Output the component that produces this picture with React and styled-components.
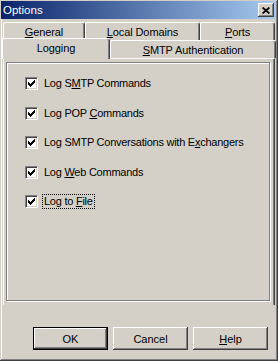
import React from "react";
import styled, { createGlobalStyle } from "styled-components";

const Global = createGlobalStyle`
  html, body { margin: 0; padding: 0; background: #d4d0c8; }
  body { font-family: "Liberation Sans", Arial, sans-serif; font-size: 11px; color: #000; }
`;

const Window = styled.div`
  box-sizing: border-box;
  width: 278px;
  height: 361px;
  background: #d4d0c8;
  padding: 1px 2px 2px 1px;
  box-shadow: inset -1px -1px #404040, inset 1px 1px #d4d0c8,
    inset -2px -2px #808080, inset 2px 2px #ffffff;
  display: flex;
  flex-direction: column;
`;

const TitleBar = styled.div`
  height: 18px;
  display: flex;
  align-items: center;
  justify-content: space-between;
  padding: 0 2px 0 2px;
  background: linear-gradient(to right, #0a246a, #a6caf0);
  color: #fff;
  font-size: 11.5px;
`;

const CloseBtn = styled.div`
  box-sizing: border-box;
  width: 16px;
  height: 14px;
  background: #d4d0c8;
  display: flex;
  align-items: center;
  justify-content: center;
  box-shadow: inset -1px -1px #404040, inset 1px 1px #ffffff,
    inset -2px -2px #808080, inset 2px 2px #d4d0c8;
`;

const Body = styled.div`
  display: flex;
  flex-direction: column;
  padding-left: 1px;
`;

const TabArea = styled.div`
  width: 274px;
  display: flex;
  flex-direction: column;
  margin-top: 3px;
`;

const TabRow = styled.div`
  display: flex;
  height: ${(p) => p.$h}px;
  margin-top: ${(p) => p.$mt}px;
  padding: 0 ${(p) => p.$px}px;
  position: relative;
  z-index: ${(p) => p.$z};
`;

const Tab = styled.div`
  box-sizing: border-box;
  flex: none;
  width: ${(p) => p.$w}px;
  height: ${(p) => (p.$selected ? 21 : 18)}px;
  margin-top: ${(p) => p.$mt || 0}px;
  padding-top: 3px;
  line-height: 13px;
  text-align: center;
  white-space: nowrap;
  letter-spacing: -0.1px;
  background: #d4d0c8;
  border-top: 1px solid #fff;
  border-left: 1px solid #fff;
  border-right: 1px solid #404040;
  border-radius: 2px 3px 0 0;
  box-shadow: inset -1px 0 #808080;
  position: relative;
  z-index: ${(p) => (p.$selected ? 3 : 1)};
`;

const Panel = styled.div`
  box-sizing: border-box;
  margin: 0 1px;
  height: 247px;
  border-top: 1px solid #fff;
  border-left: 1px solid #fff;
  border-right: 1px solid #404040;
  box-shadow: inset -1px 0 #808080;
  padding: 3px 4px 0 2px;
  position: relative;
  z-index: 1;
`;

const GroupBox = styled.div`
  box-sizing: border-box;
  height: 239px;
  border: 1px solid #808080;
  box-shadow: inset 1px 1px #fff, 1px 1px #fff;
  padding: 13px 0 0 18px;
  display: flex;
  flex-direction: column;
  gap: 14.5px;
`;

const CheckRow = styled.div`
  display: flex;
  align-items: center;
  height: 15px;
`;

const CheckBox = styled.div`
  box-sizing: border-box;
  width: 13px;
  height: 13px;
  flex: none;
  background: #fff;
  border-top: 1px solid #808080;
  border-left: 1px solid #808080;
  border-right: 1px solid #fff;
  border-bottom: 1px solid #fff;
  box-shadow: inset 1px 1px #404040, inset -1px -1px #d4d0c8;
  padding: 2px;
  svg { display: block; }
`;

const Label = styled.span`
  margin-left: 4px;
  padding: 0 1px;
  line-height: 13px;
  white-space: nowrap;
  letter-spacing: -0.25px;
  border: 1px dotted ${(p) => (p.$focus ? "#000" : "transparent")};
`;

const ButtonRow = styled.div`
  display: flex;
  justify-content: flex-end;
  gap: 5px;
  margin-top: 22px;
  padding-right: 8px;
`;

const Button = styled.button`
  box-sizing: border-box;
  width: 75px;
  height: 23px;
  padding: 0;
  background: #d4d0c8;
  font-family: "Liberation Sans", Arial, sans-serif;
  font-size: 11px;
  color: #000;
  border: ${(p) => (p.$default ? "1px solid #000" : "none")};
  box-shadow: inset -1px -1px #404040, inset 1px 1px #ffffff,
    inset -2px -2px #808080, inset 2px 2px #d4d0c8;
`;

const Check = () => (
  <svg width="7" height="7" viewBox="0 0 7 7" shapeRendering="crispEdges">
    <path
      fill="#000"
      d="M6 0h1v1H6zM5 1h2v1H5zM0 2h1v1H0zM4 2h3v1H4zM0 3h2v1H0zM3 3h3v1H3zM0 4h5v1H0zM1 5h3v1H1zM2 6h1v1H2z"
    />
  </svg>
);

const CloseGlyph = () => (
  <svg width="8" height="7" viewBox="0 0 8 7">
    <path d="M0.6 0.5 L7.4 6.5 M7.4 0.5 L0.6 6.5" stroke="#000" strokeWidth="1.7" />
  </svg>
);

const options = [
  [<>Log S<u>M</u>TP Commands</>],
  [<>Log POP <u>C</u>ommands</>],
  [<>Log SMTP Conversations with E<u>x</u>changers</>],
  [<>Log <u>W</u>eb Commands</>],
  [<>Log to <u>F</u>ile</>, true],
];

export default function App() {
  return (
    <>
      <Global />
      <Window>
        <TitleBar>
          <span>Options</span>
          <CloseBtn>
            <CloseGlyph />
          </CloseBtn>
        </TitleBar>
        <Body>
          <TabArea>
            <TabRow $h={18} $mt={0} $px={1} $z={1}>
              <Tab $w={82}>
                <u>G</u>eneral
              </Tab>
              <Tab $w={115}>
                <u>L</u>ocal Domains
              </Tab>
              <Tab $w={75}>
                <u>P</u>orts
              </Tab>
            </TabRow>
            <TabRow $h={20} $mt={-2} $px={0} $z={2}>
              <Tab $w={108} $selected>
                Logging
              </Tab>
              <Tab $w={166} $mt={2}>
                <u>S</u>MTP Authentication
              </Tab>
            </TabRow>
            <Panel>
              <GroupBox>
                {options.map(([text, focus], i) => (
                  <CheckRow key={i}>
                    <CheckBox>
                      <Check />
                    </CheckBox>
                    <Label $focus={focus}>{text}</Label>
                  </CheckRow>
                ))}
              </GroupBox>
            </Panel>
          </TabArea>
          <ButtonRow>
            <Button $default>OK</Button>
            <Button>Cancel</Button>
            <Button>
              <u>H</u>elp
            </Button>
          </ButtonRow>
        </Body>
      </Window>
    </>
  );
}
